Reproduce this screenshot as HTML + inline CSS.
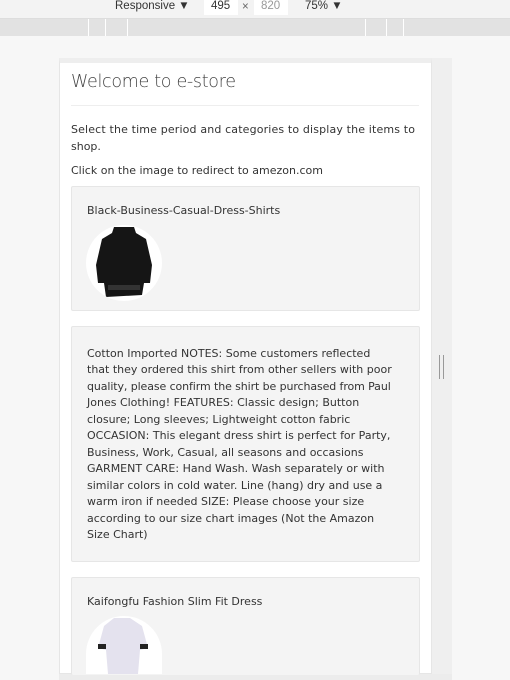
<!DOCTYPE html>
<html><head><style>
body{margin:0;width:510px;height:680px;background:#f7f7f7;position:relative;overflow:hidden;font-family:"DejaVu Sans","Liberation Sans",sans-serif;color:#333}
.a{position:absolute;white-space:nowrap}
.tb{position:absolute;left:0;top:0;width:510px;height:18px;background:#f3f3f3;border-bottom:1px solid #ddd}
.strip{position:absolute;left:0;top:19px;width:510px;height:17px;background:#e2e2e2}
.card{position:absolute;left:71px;width:347px;background:#f4f4f4;border:1px solid #e6e6e6;border-radius:2px}
.t{font-size:11px;color:#333;position:absolute;left:87px;white-space:nowrap}
.circ{position:absolute;left:86px;width:76px;height:76px;border-radius:50%;background:#fff;overflow:hidden}
.tt{font:11.5px 'Liberation Sans',sans-serif}
</style></head><body>
<div class="tb"></div>
<div class="a tt" style="left:115px;top:0;color:#333">Responsive ▼</div>
<div class="a" style="left:204px;top:0;width:34px;height:15px;background:#fff"></div>
<div class="a tt" style="left:211px;top:0;color:#333">495</div>
<div class="a tt" style="left:242px;top:1px;color:#666">×</div>
<div class="a" style="left:254px;top:0;width:34px;height:15px;background:#fff"></div>
<div class="a tt" style="left:261px;top:0;color:#999">820</div>
<div class="a tt" style="left:305px;top:0;color:#333">75% ▼</div>
<div class="strip"></div>
<div class="a" style="left:88px;top:19px;width:1px;height:17px;background:#fff"></div>
<div class="a" style="left:105px;top:19px;width:1px;height:17px;background:#fff"></div>
<div class="a" style="left:127px;top:19px;width:1px;height:17px;background:#fff"></div>
<div class="a" style="left:365px;top:19px;width:1px;height:17px;background:#fff"></div>
<div class="a" style="left:386px;top:19px;width:1px;height:17px;background:#fff"></div>
<div class="a" style="left:403px;top:19px;width:1px;height:17px;background:#fff"></div>
<div class="a" style="left:432px;top:58px;width:20px;height:622px;background:#efefef"></div>
<div class="a" style="left:59px;top:58px;width:373px;height:616px;background:#fff;border:1px solid #e6e6e6;border-top:5px solid #eee;box-sizing:border-box"></div>
<div class="a" style="left:59px;top:674px;width:393px;height:6px;background:#ececec"></div>
<div class="a" style="left:439px;top:355px;width:1px;height:24px;background:#999"></div>
<div class="a" style="left:443px;top:355px;width:1px;height:24px;background:#999"></div>
<div class="a" style="left:71px;top:72px;font:17.5px 'DejaVu Sans',sans-serif;font-weight:200;color:#444;letter-spacing:-0.3px">Welcome to e-store</div>
<div class="a" style="left:71px;top:105px;width:348px;height:1px;background:#eee"></div>
<div class="t" style="left:71px;top:123px;letter-spacing:0.15px">Select the time period and categories to display the items to</div>
<div class="t" style="left:71px;top:140px">shop.</div>
<div class="t" style="left:71px;top:164px">Click on the image to redirect to amezon.com</div>
<div class="card" style="top:186px;height:123px"></div>
<div class="t" style="top:204px">Black-Business-Casual-Dress-Shirts</div>
<div class="circ" style="top:225px"><svg width="76" height="76"><path d="M28 2 L48 2 L50 8 L60 14 L66 40 L64 58 L58 58 L56 70 L20 72 L18 58 L12 58 L10 40 L16 14 L26 8Z" fill="#151515"/><rect x="22" y="60" width="32" height="5" fill="#333"/></svg></div>
<div class="card" style="top:326px;height:234px"></div>
<div class="t" style="top:347px">Cotton Imported NOTES: Some customers reflected</div>
<div class="t" style="top:363px">that they ordered this shirt from other sellers with poor</div>
<div class="t" style="top:380px;letter-spacing:-0.1px">quality, please confirm the shirt be purchased from Paul</div>
<div class="t" style="top:396px">Jones Clothing! FEATURES: Classic design; Button</div>
<div class="t" style="top:413px">closure; Long sleeves; Lightweight cotton fabric</div>
<div class="t" style="top:429px">OCCASION: This elegant dress shirt is perfect for Party,</div>
<div class="t" style="top:446px">Business, Work, Casual, all seasons and occasions</div>
<div class="t" style="top:462px">GARMENT CARE: Hand Wash. Wash separately or with</div>
<div class="t" style="top:479px">similar colors in cold water. Line (hang) dry and use a</div>
<div class="t" style="top:495px">warm iron if needed SIZE: Please choose your size</div>
<div class="t" style="top:512px">according to our size chart images (Not the Amazon</div>
<div class="t" style="top:528px">Size Chart)</div>
<div class="card" style="top:577px;height:97px;border-bottom:none"></div>
<div class="t" style="top:595px">Kaifongfu Fashion Slim Fit Dress</div>
<div class="circ" style="top:616px;height:58px;border-radius:38px 38px 0 0"><svg width="76" height="58"><path d="M28 2 L44 2 L56 10 L62 32 L54 34 L52 58 L22 58 L20 34 L12 32 L18 10Z" fill="#e4e2ee"/><rect x="12" y="28" width="8" height="5" fill="#222"/><rect x="54" y="28" width="8" height="5" fill="#222"/></svg></div>
</body></html>
